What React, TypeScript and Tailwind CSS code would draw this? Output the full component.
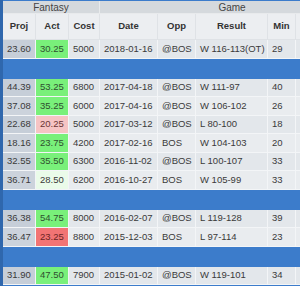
import React from 'react';

type Tone = 'green' | 'pink' | 'red' | 'pale';

interface GameRow {
  proj: string;
  act: string;
  tone: Tone;
  cost: string;
  date: string;
  opp: string;
  result: string;
  min: string;
  extra: string;
}

const TONES: Record<Tone, string> = {
  green: 'bg-[#79f07a] text-[#2f4f2f]',
  pink: 'bg-[#f6c4c4] text-[#6a3535]',
  red: 'bg-[#f27474] text-[#6a2424]',
  pale: 'bg-[#eafbe9]',
};

const GROUPS: GameRow[][] = [
  [
    { proj: '23.60', act: '30.25', tone: 'green', cost: '5000', date: '2018-01-16', opp: '@BOS', result: 'W 116-113(OT)', min: '29', extra: '-' },
  ],
  [
    { proj: '44.39', act: '53.25', tone: 'green', cost: '6800', date: '2017-04-18', opp: '@BOS', result: 'W 111-97', min: '40', extra: '-' },
    { proj: '37.08', act: '35.25', tone: 'green', cost: '6000', date: '2017-04-16', opp: '@BOS', result: 'W 106-102', min: '26', extra: '2' },
    { proj: '22.68', act: '20.25', tone: 'pink', cost: '5000', date: '2017-03-12', opp: '@BOS', result: 'L 80-100', min: '18', extra: '-' },
    { proj: '18.16', act: '23.75', tone: 'green', cost: '4200', date: '2017-02-16', opp: 'BOS', result: 'W 104-103', min: '20', extra: '-' },
    { proj: '32.55', act: '35.50', tone: 'green', cost: '6300', date: '2016-11-02', opp: '@BOS', result: 'L 100-107', min: '33', extra: '-' },
    { proj: '36.71', act: '28.50', tone: 'pale', cost: '6200', date: '2016-10-27', opp: 'BOS', result: 'W 105-99', min: '33', extra: '-' },
  ],
  [
    { proj: '36.38', act: '54.75', tone: 'green', cost: '8000', date: '2016-02-07', opp: '@BOS', result: 'L 119-128', min: '39', extra: '-' },
    { proj: '36.47', act: '23.25', tone: 'red', cost: '8800', date: '2015-12-03', opp: 'BOS', result: 'L 97-114', min: '23', extra: '-' },
  ],
  [
    { proj: '31.90', act: '47.50', tone: 'green', cost: '7900', date: '2015-01-02', opp: '@BOS', result: 'W 119-101', min: '34', extra: '6' },
  ],
];

const COLS = [
  { label: 'Proj', w: 'w-[33px]' },
  { label: 'Act', w: 'w-[33px]' },
  { label: 'Cost', w: 'w-[31px]' },
  { label: 'Date', w: 'w-[58px]' },
  { label: 'Opp', w: 'w-[38px]' },
  { label: 'Result', w: 'w-[72px]' },
  { label: 'Min', w: 'w-[28px]' },
  { label: '', w: 'w-[34px]' },
  { label: '', w: 'w-[34px]' },
];

function Row({ r, alt }: { r: GameRow; alt: boolean }) {
  const base = alt ? 'bg-[#e9ecef]' : 'bg-[#e3e7eb]';
  const cell = 'h-full flex items-center pl-[4px] border-r border-[#f3f5f7] shrink-0';
  return (
    <div className="flex h-[18.5px] border-b border-[#f3f5f7]">
      <div className={`${cell} w-[33px] ${alt ? 'bg-[#ccd3dc]' : 'bg-[#c6ced8]'}`}>{r.proj}</div>
      <div className={`${cell} w-[33px] ${TONES[r.tone]}`}>{r.act}</div>
      <div className={`${cell} w-[31px] ${base}`}>{r.cost}</div>
      <div className={`${cell} w-[58px] ${base}`}>{r.date}</div>
      <div className={`${cell} w-[38px] ${base}`}>{r.opp}</div>
      <div className={`${cell} w-[72px] ${base}`}>{r.result}</div>
      <div className={`${cell} w-[28px] ${base}`}>{r.min}</div>
      <div className={`${cell} w-[34px] ${base} text-[#888]`}>{r.extra}</div>
      <div className={`${cell} w-[34px] ${base}`} />
    </div>
  );
}

export default function App() {
  return (
    <div className="w-[300px] h-[286px] overflow-hidden flex bg-[#3c7ccb] font-['Liberation_Sans',Arial,sans-serif] text-[9.5px] text-[#3a3a3a]">
      {/* left edge */}
      <div className="w-[3px] shrink-0 bg-[#2f67ad]" />

      <div className="flex flex-col pt-[1px] w-max">
        {/* group header */}
        <div className="flex h-[13px] bg-[#d5d9dd] border-b border-[#e8eaec] text-[10px] text-[#444]">
          <div className="w-[97px] shrink-0 flex items-center justify-center border-r border-[#e8eaec]">Fantasy</div>
          <div className="w-[264px] shrink-0 flex items-center justify-center">Game</div>
        </div>

        {/* column header */}
        <div className="flex h-[26px] bg-[#eceef1] border-b border-[#dfe2e6] font-bold text-[#333]">
          {COLS.map((c, i) => (
            <div key={i} className={`${c.w} shrink-0 flex items-center justify-center border-r border-[#dfe2e6]`}>
              {c.label}
            </div>
          ))}
        </div>

        {GROUPS.map((g, gi) => (
          <div key={gi} className="flex flex-col">
            {gi > 0 && <div className="h-[20px]" />}
            {g.map((r, ri) => (
              <Row key={r.date} r={r} alt={ri % 2 === 1} />
            ))}
          </div>
        ))}
      </div>
    </div>
  );
}
